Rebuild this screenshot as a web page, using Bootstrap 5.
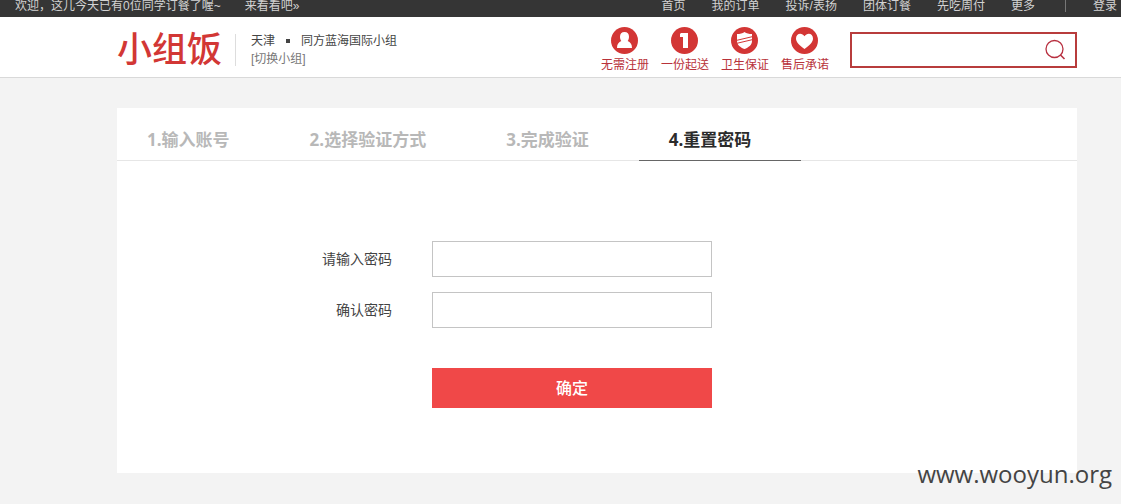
<!DOCTYPE html>
<html lang="zh-CN">
<head>
<meta charset="utf-8">
<meta name="viewport" content="width=device-width, initial-scale=1">
<title>小组饭 - 重置密码</title>
<link href="https://cdn.jsdelivr.net/npm/bootstrap@5.3.0/dist/css/bootstrap.min.css" rel="stylesheet">
<style>
  body { background: #f3f3f3; color: #444; font: 12px/18px "Liberation Sans", "Noto Sans CJK SC", sans-serif; }
  a { color: inherit; text-decoration: none; }
  .page-pad { padding-left: 117px; padding-right: 44px; }
  .topbar { background: #353535; color: #d2d2d2; line-height: 12px; padding: 0 4px 5px 15px; white-space: nowrap; }
  .topbar nav { gap: 26px; }
  .topbar .sep { border-left: 1px solid #777; margin: 0 1px 0 4px; }
  .site-head { background: #fff; border-bottom: 1px solid #d9d9d9; height: 61px; padding-top: 5px; }
  .brand-name { color: #d23735; font-size: 35px; line-height: 34px; font-weight: 500; }
  .group-info { border-left: 1px solid #ddd; margin-left: 13px; padding-left: 15px; height: 32px; }
  .dot { width: 4px; height: 4px; background: #444; margin: 0 11px; }
  .switch-link { color: #777; }
  .promise { gap: 12px; margin-right: 21px; color: #b8323a; line-height: 16px; text-align: center; }
  .promise svg { display: block; margin: 0 auto 3px; }
  .search-box { width: 227px; height: 36px; border: 2px solid #b83c3c; background: #fff; }
  .search-box input { min-width: 0; outline: 0; }
  .search-box button { width: 40px; }
  .panel { background: #fff; margin-top: 30px; padding-bottom: 65px; }
  .steps { border-bottom: 1px solid #e6e6e6; font: bold 17px/24px "Open Sans", "Noto Sans CJK SC", sans-serif; color: #b8b8b8; }
  .steps li { padding: 20px 50px 8px 30px; margin-bottom: -1px; border-bottom: 1px solid transparent; white-space: nowrap; }
  .steps li.current { color: #2b2b2b; border-color: #666; }
  .reset-form { padding-top: 80px; font-size: 14px; }
  .form-line { gap: 40px; margin-bottom: 15px; }
  .form-line label, .form-line .blank { width: 275px; text-align: right; }
  .form-line input { width: 280px; height: 36px; border: 1px solid #c4c4c4; padding: 0 10px; }
  .submit-line { margin: 40px 0 0; }
  .submit-line button { width: 280px; height: 40px; border: 0; padding: 0 0 2px; background: #f04848; color: #fff; font: 500 16px/24px "Noto Sans CJK SC", sans-serif; }
  .watermark { right: 9px; bottom: 13px; font: 24px/34px "Open Sans", sans-serif; color: #444; }
</style>
<script src="https://cdn.jsdelivr.net/npm/bootstrap@5.3.0/dist/js/bootstrap.bundle.min.js"></script>
</head>
<body class="position-relative min-vh-100">
<div class="topbar d-flex justify-content-between overflow-hidden">
  <div class="d-flex gap-4"><span>欢迎，这儿今天已有0位同学订餐了喔~</span><a href="#">来看看吧»</a></div>
  <nav class="d-flex">
    <a href="#">首页</a><a href="#">我的订单</a><a href="#">投诉/表扬</a><a href="#">团体订餐</a><a href="#">先吃周付</a><a href="#">更多</a><span class="sep"></span><a href="#">登录</a>
  </nav>
</div>
<header class="site-head page-pad d-flex justify-content-between text-nowrap">
  <div class="d-flex align-items-center">
    <a href="#" class="brand-name">小组饭</a>
    <div class="group-info d-flex flex-column justify-content-center">
      <div class="d-flex align-items-center">天津<span class="dot"></span>同方蓝海国际小组</div>
      <a href="#" class="switch-link">[切换小组]</a>
    </div>
  </div>
  <div class="d-flex align-items-center">
    <div class="promise d-flex">
      <div><svg width="27" height="27" viewBox="0 0 27 27"><circle cx="13.500" cy="13.500" r="13.500" fill="#d33635"/><path d="M13.500 5c3 0 4.500 2 4.500 4.800 0 2-.6 3.200-1.300 4.200 2.500 1 4.300 3 4.300 7H6c0-4 1.800-6 4.300-7C9.600 13 9 11.800 9 9.800 9 7 10.500 5 13.500 5z" fill="#fff"/></svg>无需注册</div>
      <div><svg width="27" height="27" viewBox="0 0 27 27"><circle cx="13.500" cy="13.500" r="13.500" fill="#d33635"/><path d="M10 6h7v15h-5V10H9V7z" fill="#fff"/></svg>一份起送</div>
      <div><svg width="27" height="27" viewBox="0 0 27 27"><circle cx="13.500" cy="13.500" r="13.500" fill="#d33635"/><path d="M13.500 5c2 1.500 4.500 2 7.500 2v7c0 4-3.500 6.500-7.500 8-4-1.500-7.500-4-7.500-8V7c3 0 5.500-.5 7.500-2z" fill="#fff"/><path d="M5 13.500L22 9.500M5 16.500L22 12.500" stroke="#d33635" fill="none"/></svg>卫生保证</div>
      <div><svg width="27" height="27" viewBox="0 0 27 27"><circle cx="13.500" cy="13.500" r="13.500" fill="#d33635"/><path d="M13.500 22C9 18.500 5 15.500 5 11.500 5 6 11 5 13.500 9.300 16 5 22 6 22 11.500c0 4-4 7-8.500 10.500z" fill="#fff"/></svg>售后承诺</div>
    </div>
    <form class="search-box d-flex">
      <input type="text" class="flex-grow-1 border-0" aria-label="搜索">
      <button type="button" class="btn p-0 border-0" aria-label="搜索"><svg class="d-block mx-auto" width="22" height="22" viewBox="0 0 22 22" fill="none" stroke="#b83040"><circle cx="10.500" cy="10" r="8.500" stroke-width="1.300"/><path d="M16.500 16l4 4" stroke-width="1.600"/></svg></button>
    </form>
  </div>
</header>
<main class="page-pad">
  <section class="panel">
    <ol class="steps list-unstyled d-flex mb-0">
      <li>1.输入账号</li><li>2.选择验证方式</li><li>3.完成验证</li><li class="current" aria-current="step">4.重置密码</li>
    </ol>
    <form class="reset-form">
      <div class="form-line d-flex align-items-center"><label for="pw">请输入密码</label><input id="pw" type="password"></div>
      <div class="form-line d-flex align-items-center"><label for="pw2">确认密码</label><input id="pw2" type="password"></div>
      <div class="form-line submit-line d-flex"><span class="blank"></span><button type="button">确定</button></div>
    </form>
  </section>
</main>
<div class="watermark position-absolute">www.wooyun.org</div>
</body>
</html>
